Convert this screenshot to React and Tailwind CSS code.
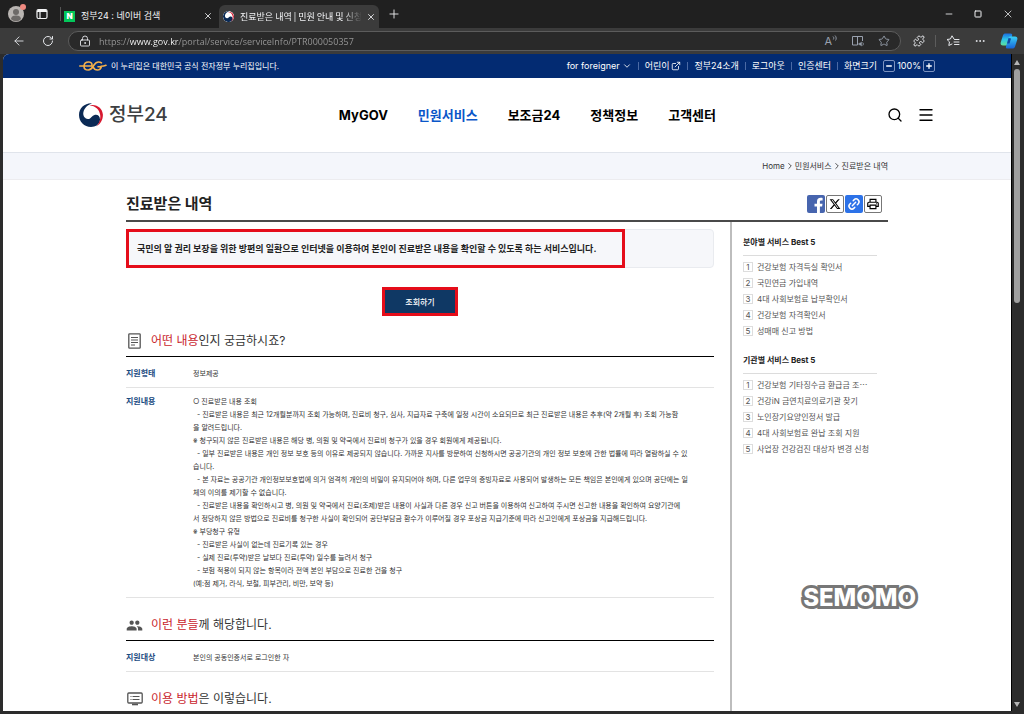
import {
  ArrowLeft,
  ChevronDown,
  ChevronRight,
  Ellipsis,
  ExternalLink,
  Link2,
  LockKeyhole,
  Menu,
  Minus,
  Plus,
  Puzzle,
  RotateCw,
  Search,
  Square,
  Star,
  X,
} from "lucide-react";
import { FaXTwitter } from "react-icons/fa6";
import { MdGroup, MdOutlinePrint } from "react-icons/md";

const navItems = ["MyGOV", "민원서비스", "보조금24", "정책정보", "고객센터"];

const bestByField = [
  "건강보험 자격득실 확인서",
  "국민연금 가입내역",
  "4대 사회보험료 납부확인서",
  "건강보험 자격확인서",
  "성매매 신고 방법",
];

const bestByAgency = [
  "건강보험 기타징수금 환급금 조⋯",
  "건강iN 금연치료의료기관 찾기",
  "노인장기요양인정서 발급",
  "4대 사회보험료 완납 조회 지원",
  "사업장 건강검진 대상자 변경 신청",
];

const details = [
  "○ 진료받은 내용 조회",
  "  - 진료받은 내용은 최근 12개월분까지 조회 가능하며, 진료비 청구, 심사, 지급자료 구축에 일정 시간이 소요되므로 최근 진료받은 내용은 추후(약 2개월 후) 조회 가능함",
  "을 알려드립니다.",
  "※ 청구되지 않은 진료받은 내용은 해당 병, 의원 및 약국에서 진료비 청구가 있을 경우 회원에게 제공됩니다.",
  "  - 일부 진료받은 내용은 개인 정보 보호 등의 이유로 제공되지 않습니다. 가까운 지사를 방문하여 신청하시면 공공기관의 개인 정보 보호에 관한 법률에 따라 열람하실 수 있",
  "습니다.",
  "  - 본 자료는 공공기관 개인정보보호법에 의거 엄격히 개인의 비밀이 유지되어야 하며, 다른 업무의 증빙자료로 사용되어 발생하는 모든 책임은 본인에게 있으며 공단에는 일",
  "체의 이의를 제기할 수 없습니다.",
  "  - 진료받은 내용을 확인하시고 병, 의원 및 약국에서 진료(조제)받은 내용이 사실과 다른 경우 신고 버튼을 이용하여 신고하여 주시면 신고한 내용을 확인하여 요양기관에",
  "서 정당하지 않은 방법으로 진료비를 청구한 사실이 확인되어 공단부담금 환수가 이루어질 경우 포상금 지급기준에 따라 신고인에게 포상금을 지급해드립니다.",
  "※ 부당청구 유형",
  "  - 진료받은 사실이 없는데 진료기록 있는 경우",
  "  - 실제 진료(투약)받은 날보다 진료(투약) 일수를 늘려서 청구",
  "  - 보험 적용이 되지 않는 항목이라 전액 본인 부담으로 진료한 건을 청구",
  "(예:점 제거, 라식, 보철, 피부관리, 비만, 보약 등)",
];

function GovMark({ className }) {
  return (
    <svg viewBox="0 0 24 24" className={className} aria-hidden="true">
      <path
        fill="#0b2a55"
        d="M13 .3C6-.2 0 5 0 12c0 6.600 5.200 12 12 12 4.600 0 7.700-2.200 8.800-5.700 1-4.500-1.800-7.300-5.300-6.300-3.300 1-3.400 4.300-6.700 4-3.300-.3-5.300-3.800-4.300-7.300C5.500 4.700 9 2 13 .3Z"
      />
      <path
        fill="#d7182f"
        d="M10.500 2.300C18 .6 23.500 5.500 23.900 11.500c.2 5.200-2.200 9.200-6.400 11.900 2.900-3.400 4.400-7.400 3.600-11.900C20.200 6.500 16.500 3 10.500 2.300Z"
      />
    </svg>
  );
}

function EgMark() {
  return (
    <svg
      viewBox="0 0 28 12"
      className="h-3 w-7"
      fill="none"
      stroke="#f5b04a"
      strokeWidth="1.600"
      strokeLinecap="round"
      aria-hidden="true"
    >
      <path d="M.8 6H12c1.500 0 1.600-4-2.300-4C6.500 2 5 4.200 5 6.400 5 8.800 7 10 9.300 10c3.200 0 4.200-2.600 5.700-5 1.400-2.200 3-3 4.600-3 1.300 0 2.200.3 2.900.8" />
      <path d="M14.500 7.500C15 9 16.500 10 18.500 10c2.300 0 3.300-1.500 3.900-3.300H19M22 6.300c2 0 3.500-.3 5-1" />
    </svg>
  );
}

function CopilotMark() {
  return (
    <svg viewBox="0 0 18 18" className="h-[18px] w-[18px]" aria-hidden="true">
      <defs>
        <linearGradient id="copilotLeft" x1="0" y1="0" x2="0" y2="1">
          <stop offset="0" stopColor="#1b6fe0" />
          <stop offset="0.5" stopColor="#2cc4e8" />
          <stop offset="1" stopColor="#5fe09a" />
        </linearGradient>
        <linearGradient id="copilotRight" x1="0" y1="0" x2="0" y2="1">
          <stop offset="0" stopColor="#3ad0f5" />
          <stop offset="1" stopColor="#1763d8" />
        </linearGradient>
      </defs>
      <path
        fill="url(#copilotLeft)"
        d="M5.500 1.500h5c1.500 0 2 1 1.600 2.200L9.500 12c-.4 1-1 1.500-2 1.500H3c-1.800 0-2.800-1.300-2.300-3L3 3.300c.4-1.200 1.300-1.800 2.500-1.800Z"
      />
      <path
        fill="url(#copilotRight)"
        d="M10.500 4.500H15c1.800 0 2.800 1.300 2.300 3L15 14.700c-.4 1.200-1.300 1.800-2.500 1.800h-5c-1.300 0-1.900-.9-1.500-2.100L8.500 6c.4-1 1-1.500 2-1.500Z"
      />
      <path fill="#1246a0" d="M8.500 6 7 11.500h2.500L11 6.500Z" />
    </svg>
  );
}

function TabBar() {
  return (
    <div className="flex h-7 shrink-0 items-end bg-[#202020] text-gray-100">
      <div className="flex h-6 items-center self-center pl-2">
        <button
          aria-label="프로필"
          className="relative h-4 w-4 rounded-full bg-[#b9b5b2]"
        >
          <svg viewBox="0 0 16 16" className="h-4 w-4" aria-hidden="true">
            <circle cx="8" cy="6" r="3" fill="#6d6a68" />
            <path
              d="M3 13c.5-3 2.500-3.500 5-3.500s4.500.5 5 3.500c-2.500 3-7.500 3-10 0Z"
              fill="#6d6a68"
            />
          </svg>
          <span className="absolute -top-0.5 -right-0.5 h-1.5 w-1.5 rounded-full bg-[#f08a80]" />
        </button>
        <button aria-label="탭 작업 메뉴" className="ml-3">
          <svg
            viewBox="0 0 12 12"
            className="h-3 w-3"
            fill="none"
            stroke="currentColor"
            strokeWidth="1.200"
            aria-hidden="true"
          >
            <rect x="1" y="1.500" width="10" height="9" rx="1.500" />
            <path d="M1 3.500h10M4 3.500v7" />
            <path d="M1.500 2.500h9" />
          </svg>
        </button>
        <span className="ml-3 h-3.5 w-px bg-[#555]" />
      </div>

      <div className="flex h-6 w-[158px] items-center gap-1.5 pr-1.5 pl-[3px]">
        <span className="flex h-[11px] w-[11px] items-center justify-center bg-[#03c75a] text-[8px] leading-none font-black text-white">
          N
        </span>
        <span className="flex-1 text-[9px] whitespace-nowrap">
          정부24 : 네이버 검색
        </span>
        <button aria-label="탭 닫기">
          <X className="h-2.5 w-2.5" />
        </button>
      </div>

      <div className="flex h-[23px] w-[160px] items-center gap-1 rounded-t-md bg-[#3b3b3b] pr-1.5 pl-1">
        <GovMark className="h-[11px] w-[11px] shrink-0 rounded-full bg-white" />
        <span className="flex-1 mask-r-from-85% pl-0.5 font-['Noto_Sans_CJK_KR',sans-serif] text-[9px] whitespace-nowrap">
          진료받은 내역 | 민원 안내 및 신청
        </span>
        <button aria-label="탭 닫기">
          <X className="h-2.5 w-2.5" />
        </button>
      </div>

      <button aria-label="새 탭" className="ml-2 self-center">
        <Plus className="h-3.5 w-3.5" strokeWidth={1.5} />
      </button>

      <div className="ml-auto flex items-center gap-5 self-center pr-2.5">
        <button aria-label="최소화">
          <Minus className="h-2.5 w-2.5" />
        </button>
        <button aria-label="최대화">
          <Square className="h-2 w-2" strokeWidth={3} />
        </button>
        <button aria-label="닫기">
          <X className="h-3 w-3" strokeWidth={1.5} />
        </button>
      </div>
    </div>
  );
}

function AddressBar() {
  return (
    <div className="flex h-[26px] shrink-0 items-center bg-[#3b3b3b] pr-1.5 pl-3 text-gray-200">
      <button aria-label="뒤로">
        <ArrowLeft className="h-3.5 w-3.5" strokeWidth={1.5} />
      </button>
      <button aria-label="새로 고침" className="ml-4">
        <RotateCw className="h-3 w-3" strokeWidth={2} />
      </button>

      <div className="ml-3.5 flex h-5 flex-1 items-center gap-2.5 rounded-full border border-[#5c5c5c] bg-[#292929] px-2.5 text-gray-400">
        <LockKeyhole className="h-3 w-3 text-gray-200" strokeWidth={1.8} />
        <input
          type="text"
          aria-label="주소"
          defaultValue="https://www.gov.kr/portal/service/serviceInfo/PTR000050357"
          className="-ml-1.5 h-4 min-w-0 flex-1 bg-[linear-gradient(to_right,#9a9a9a_35px,#ffffff_35px,#ffffff_84px,#9a9a9a_84px)] bg-clip-text pl-1 font-['Open_Sans',sans-serif] text-[9px] text-transparent outline-none"
        />
        <button
          aria-label="소리내어 읽기"
          className="mr-1 flex items-start text-[11px] leading-3"
        >
          A
          <svg
            viewBox="0 0 5 6"
            className="h-1.5 w-[5px]"
            fill="none"
            stroke="currentColor"
            aria-hidden="true"
          >
            <path
              d="M1 1.500c1 .8 1 2 .3 3M3 .5c1.500 1.500 1.500 3.500.5 5"
              strokeWidth=".9"
            />
          </svg>
        </button>
        <button aria-label="몰입형 리더" className="mr-1">
          <svg
            viewBox="0 0 13 12"
            className="h-3 w-[13px]"
            fill="none"
            stroke="currentColor"
            aria-hidden="true"
          >
            <path d="M6.500 10H1.500V1.500h10V6M6.500 1.500V10" />
            <path d="M7.800 8.200h1.200l1.500-1.200v4L9 9.800H7.800Z" fill="currentColor" strokeWidth=".4" />
            <path d="M11.700 7.500c.8.800.8 2.200 0 3" strokeWidth=".9" />
          </svg>
        </button>
        <button aria-label="즐겨찾기에 추가">
          <Star className="h-3 w-3" strokeWidth={1.8} />
        </button>
      </div>

      <div className="ml-3 flex items-center gap-2.5">
        <button aria-label="확장">
          <Puzzle className="h-3 w-3" />
        </button>
        <span className="h-3 w-px bg-[#5c5c5c]" />
        <button aria-label="즐겨찾기">
          <svg
            viewBox="0 0 14 12"
            className="h-3 w-3.5"
            fill="none"
            stroke="currentColor"
            strokeLinejoin="round"
            strokeLinecap="round"
            aria-hidden="true"
          >
            <path d="M8 4 6 .8 4.400 4 1 4.500l2.500 2.400-.7 3.600L6 9" />
            <path d="M8.500 4.500H13M8 7h5M8.500 9.500H13" />
          </svg>
        </button>
        <button aria-label="설정 및 기타" className="mx-1">
          <Ellipsis className="h-3 w-3" />
        </button>
        <button aria-label="Copilot">
          <CopilotMark />
        </button>
      </div>
    </div>
  );
}

function Divider() {
  return <span className="h-2 w-px bg-[#4b6aa5]" />;
}

function TopStrip() {
  return (
    <div className="shrink-0 bg-[#032b72] text-white">
      <div className="mx-auto flex h-6 max-w-[856px] items-center justify-between">
        <p className="flex items-center gap-1 text-[8px]">
          <EgMark />이 누리집은 대한민국 공식 전자정부 누리집입니다.
        </p>
        <div className="flex items-center gap-1.5 text-[9px] leading-3 whitespace-nowrap">
          <button className="flex items-center gap-0.5">
            for foreigner
            <ChevronDown className="h-2.5 w-2.5" strokeWidth={2} />
          </button>
          <Divider />
          <a href="#kids" className="flex items-center gap-0.5">
            어린이
            <ExternalLink className="h-2.5 w-2.5" />
          </a>
          <Divider />
          <a href="#about">정부24소개</a>
          <Divider />
          <a href="#logout">로그아웃</a>
          <Divider />
          <a href="#cert">인증센터</a>
          <Divider />
          <span>화면크기</span>
          <div className="flex items-center gap-0.5">
            <button
              aria-label="화면 축소"
              className="flex h-3 w-3 items-center justify-center rounded-xs border border-[#7d93c0]"
            >
              <Minus className="h-2 w-2" strokeWidth={4} />
            </button>
            <span>100%</span>
            <button
              aria-label="화면 확대"
              className="flex h-3 w-3 items-center justify-center rounded-xs border border-[#7d93c0]"
            >
              <Plus className="h-2 w-2" strokeWidth={4} />
            </button>
          </div>
        </div>
      </div>
    </div>
  );
}

function SiteHeader() {
  return (
    <header className="mx-auto flex h-[74px] w-full max-w-[856px] shrink-0 items-center justify-between">
      <a
        href="#home"
        className="flex items-center gap-1.5 text-[19px] leading-6 font-medium text-[#3d3f42]"
      >
        <GovMark className="h-6 w-6" />
        정부24
      </a>
      <nav className="flex gap-[30px] text-[13px] leading-5 font-bold text-black">
        {navItems.map((item) => (
          <a
            key={item}
            href="#menu"
            className={item === "민원서비스" ? "text-[#0b57c9]" : ""}
          >
            {item}
          </a>
        ))}
      </nav>
      <div className="flex items-center gap-3.5 text-black">
        <button aria-label="검색">
          <Search className="h-4 w-4" strokeWidth={2} />
        </button>
        <button aria-label="전체메뉴">
          <Menu className="h-[18px] w-[18px]" strokeWidth={1.8} />
        </button>
      </div>
    </header>
  );
}

function Breadcrumb() {
  return (
    <div className="shrink-0 border-t border-b border-t-[#e0e4eb] border-b-[#ececef] bg-[#f4f6fb]">
      <div className="mx-auto flex h-[26px] max-w-[762px] items-center justify-end text-[8px] text-[#333]">
        <a href="#home">Home</a>
        <ChevronRight className="h-2.5 w-2.5" />
        <a href="#service">민원서비스</a>
        <ChevronRight className="h-2.5 w-2.5" />
        <a href="#detail">진료받은 내역</a>
      </div>
    </div>
  );
}

function ShareButtons() {
  return (
    <div className="flex gap-px">
      <button
        aria-label="페이스북"
        className="h-[18px] w-[18px] overflow-hidden rounded-xs bg-[#4765ae]"
      >
        <svg viewBox="0 0 18 18" className="h-[18px] w-[18px]" aria-hidden="true">
          <path
            fill="#fff"
            d="M10 18v-6.500H7.500V8.800H10V6.500c0-2.400 1.400-3.700 3.600-3.700.9 0 1.700.1 2 .2v2.400h-1.400c-1.100 0-1.300.6-1.300 1.400v2h2.600l-.4 2.700h-2.200V18Z"
          />
        </svg>
      </button>
      <button
        aria-label="X"
        className="flex h-[18px] w-[18px] items-center justify-center rounded-xs border border-[#777] text-black"
      >
        <FaXTwitter className="h-3 w-3" />
      </button>
      <button
        aria-label="링크 복사"
        className="flex h-[18px] w-[18px] items-center justify-center rounded-xs bg-[#2c72e8] text-white"
      >
        <Link2 className="h-3.5 w-3.5 -rotate-45" strokeWidth={2.5} />
      </button>
      <button
        aria-label="인쇄"
        className="flex h-[18px] w-[18px] items-center justify-center rounded-xs border border-[#777] text-black"
      >
        <MdOutlinePrint className="h-3.5 w-3.5" />
      </button>
    </div>
  );
}

function SectionTitle({ icon, accent, rest }) {
  return (
    <h3 className="mb-[3px] flex h-[31px] items-center gap-2 border-b border-black text-[12px] text-[#333]">
      <span className="flex w-[17px] justify-center text-[#555]">{icon}</span>
      <span>
        <span className="text-[#c9252d]">{accent}</span>
        {rest}
      </span>
    </h3>
  );
}

function InfoRow({ label, children }) {
  return (
    <dl className="flex border-b border-[#e3e3e3] py-[7px] leading-[13px]">
      <dt className="w-[67px] shrink-0 text-[8px] font-bold text-[#1b4b82]">
        {label}
      </dt>
      <dd className="text-[7px] text-[#333]">{children}</dd>
    </dl>
  );
}

function BestList({ title, items }) {
  return (
    <section>
      <h3 className="border-b border-[#dcdcdc] pb-1.5 text-[8px] leading-[13px] font-bold text-[#222]">
        {title}
      </h3>
      <ol className="mt-[3px] text-[8px] text-[#555]">
        {items.map((item, index) => (
          <li key={item} className="flex h-4 items-center gap-1">
            <span className="flex h-2.5 w-2.5 items-center justify-center border border-[#ddd] leading-none">
              {index + 1}
            </span>
            <a href="#best" className="whitespace-nowrap">
              {item}
            </a>
          </li>
        ))}
      </ol>
    </section>
  );
}

function ServicePage() {
  return (
    <main className="mx-auto flex w-full max-w-[762px] flex-1 flex-col">
      <div className="flex items-center justify-between border-b-2 border-[#4a4a4a] pt-[15px] pr-1.5 pb-[7px]">
        <h2 className="text-[15px] leading-[18px] font-bold text-[#222]">
          진료받은 내역
        </h2>
        <ShareButtons />
      </div>

      <div className="flex flex-1">
        <div className="min-w-0 flex-1 pt-[7px] pr-4">
          <div className="flex rounded-sm border border-[#e9ebef] bg-[#f6f7fa]">
            <p className="-m-px w-[499px] border-3 border-[#e50d1a] px-2 py-[9px] text-[9px] leading-[15px] font-bold whitespace-nowrap text-[#222]">
              국민의 알 권리 보장을 위한 방편의 일환으로 인터넷을 이용하여
              본인이 진료받은 내용을 확인할 수 있도록 하는 서비스입니다.
            </p>
          </div>

          <div className="mt-[19px] flex justify-center">
            <button className="h-[29px] w-[76px] border-3 border-[#e50d1a] bg-[#0f3864] text-[8px] font-medium text-white">
              조회하기
            </button>
          </div>

          <div className="pt-2.5">
            <SectionTitle
              icon={
                <svg
                  viewBox="0 0 13 16"
                  className="h-4 w-[13px]"
                  fill="none"
                  stroke="currentColor"
                  aria-hidden="true"
                >
                  <rect x=".8" y=".8" width="11.400" height="14.400" rx=".8" strokeWidth="1.300" />
                  <path d="M3 4.500h7M3 7h7M3 9.500h7M3 12h4" />
                </svg>
              }
              accent="어떤 내용"
              rest="인지 궁금하시죠?"
            />
            <InfoRow label="지원형태">정보제공</InfoRow>
            <InfoRow label="지원내용">
              {details.map((line) => (
                <p key={line} className="whitespace-pre">
                  {line}
                </p>
              ))}
            </InfoRow>
          </div>

          <div className="pt-3">
            <SectionTitle
              icon={<MdGroup className="h-[17px] w-[17px]" />}
              accent="이런 분들"
              rest="께 해당합니다."
            />
            <InfoRow label="지원대상">
              본인의 공동인증서로 로그인한 자
            </InfoRow>
          </div>

          <div className="pt-3">
            <SectionTitle
              icon={
                <svg
                  viewBox="0 0 16 14"
                  className="h-3.5 w-4"
                  fill="none"
                  stroke="currentColor"
                  aria-hidden="true"
                >
                  <rect x=".8" y="1" width="14.400" height="10" rx="1" strokeWidth="1.300" />
                  <path d="M5 12.500h6" strokeWidth="1.600" />
                  <path d="M3.500 4.500h1M5.500 4.500h7M3.500 7.500h1M5.500 7.500h7" />
                </svg>
              }
              accent="이용 방법"
              rest="은 이렇습니다."
            />
          </div>
        </div>

        <aside className="w-[158px] shrink-0 border-l-2 border-[#bdbdbd] pt-3.5 pr-[11px] pl-[11px]">
          <div className="flex flex-col gap-[15px]">
            <BestList title="분야별 서비스 Best 5" items={bestByField} />
            <BestList title="기관별 서비스 Best 5" items={bestByAgency} />
          </div>
        </aside>
      </div>
    </main>
  );
}

function ScrollBar() {
  return (
    <div className="flex w-[11px] shrink-0 flex-col items-center border-l border-black bg-[#2c2c2c] pt-1.5 pb-1">
      <span className="h-0 w-0 border-x-3 border-b-5 border-x-transparent border-b-[#b5b5b5]" />
      <div className="mt-1 w-1.5 flex-1">
        <div className="h-[37%] rounded-full bg-[#9f9f9f]" />
      </div>
      <span className="h-0 w-0 border-x-3 border-t-5 border-x-transparent border-t-[#b5b5b5]" />
    </div>
  );
}

function App() {
  return (
    <div className="relative flex h-screen flex-col overflow-hidden bg-[#2c2c2c] font-[Inter,'Noto_Sans_CJK_KR',sans-serif]">
      <TabBar />
      <AddressBar />

      <div className="mr-0.5 mb-[3px] ml-[3px] flex min-h-0 flex-1">
        <div className="flex min-w-0 flex-1 flex-col overflow-hidden rounded-tl-md bg-white">
          <TopStrip />
          <SiteHeader />
          <Breadcrumb />
          <ServicePage />
        </div>
        <ScrollBar />
      </div>

      <span className="absolute right-[108px] bottom-[102px] text-[24px] leading-7 font-extrabold text-white [-webkit-text-stroke:6px_#777] [paint-order:stroke_fill]">
        SEMOMO
      </span>
    </div>
  );
}

export default App;
